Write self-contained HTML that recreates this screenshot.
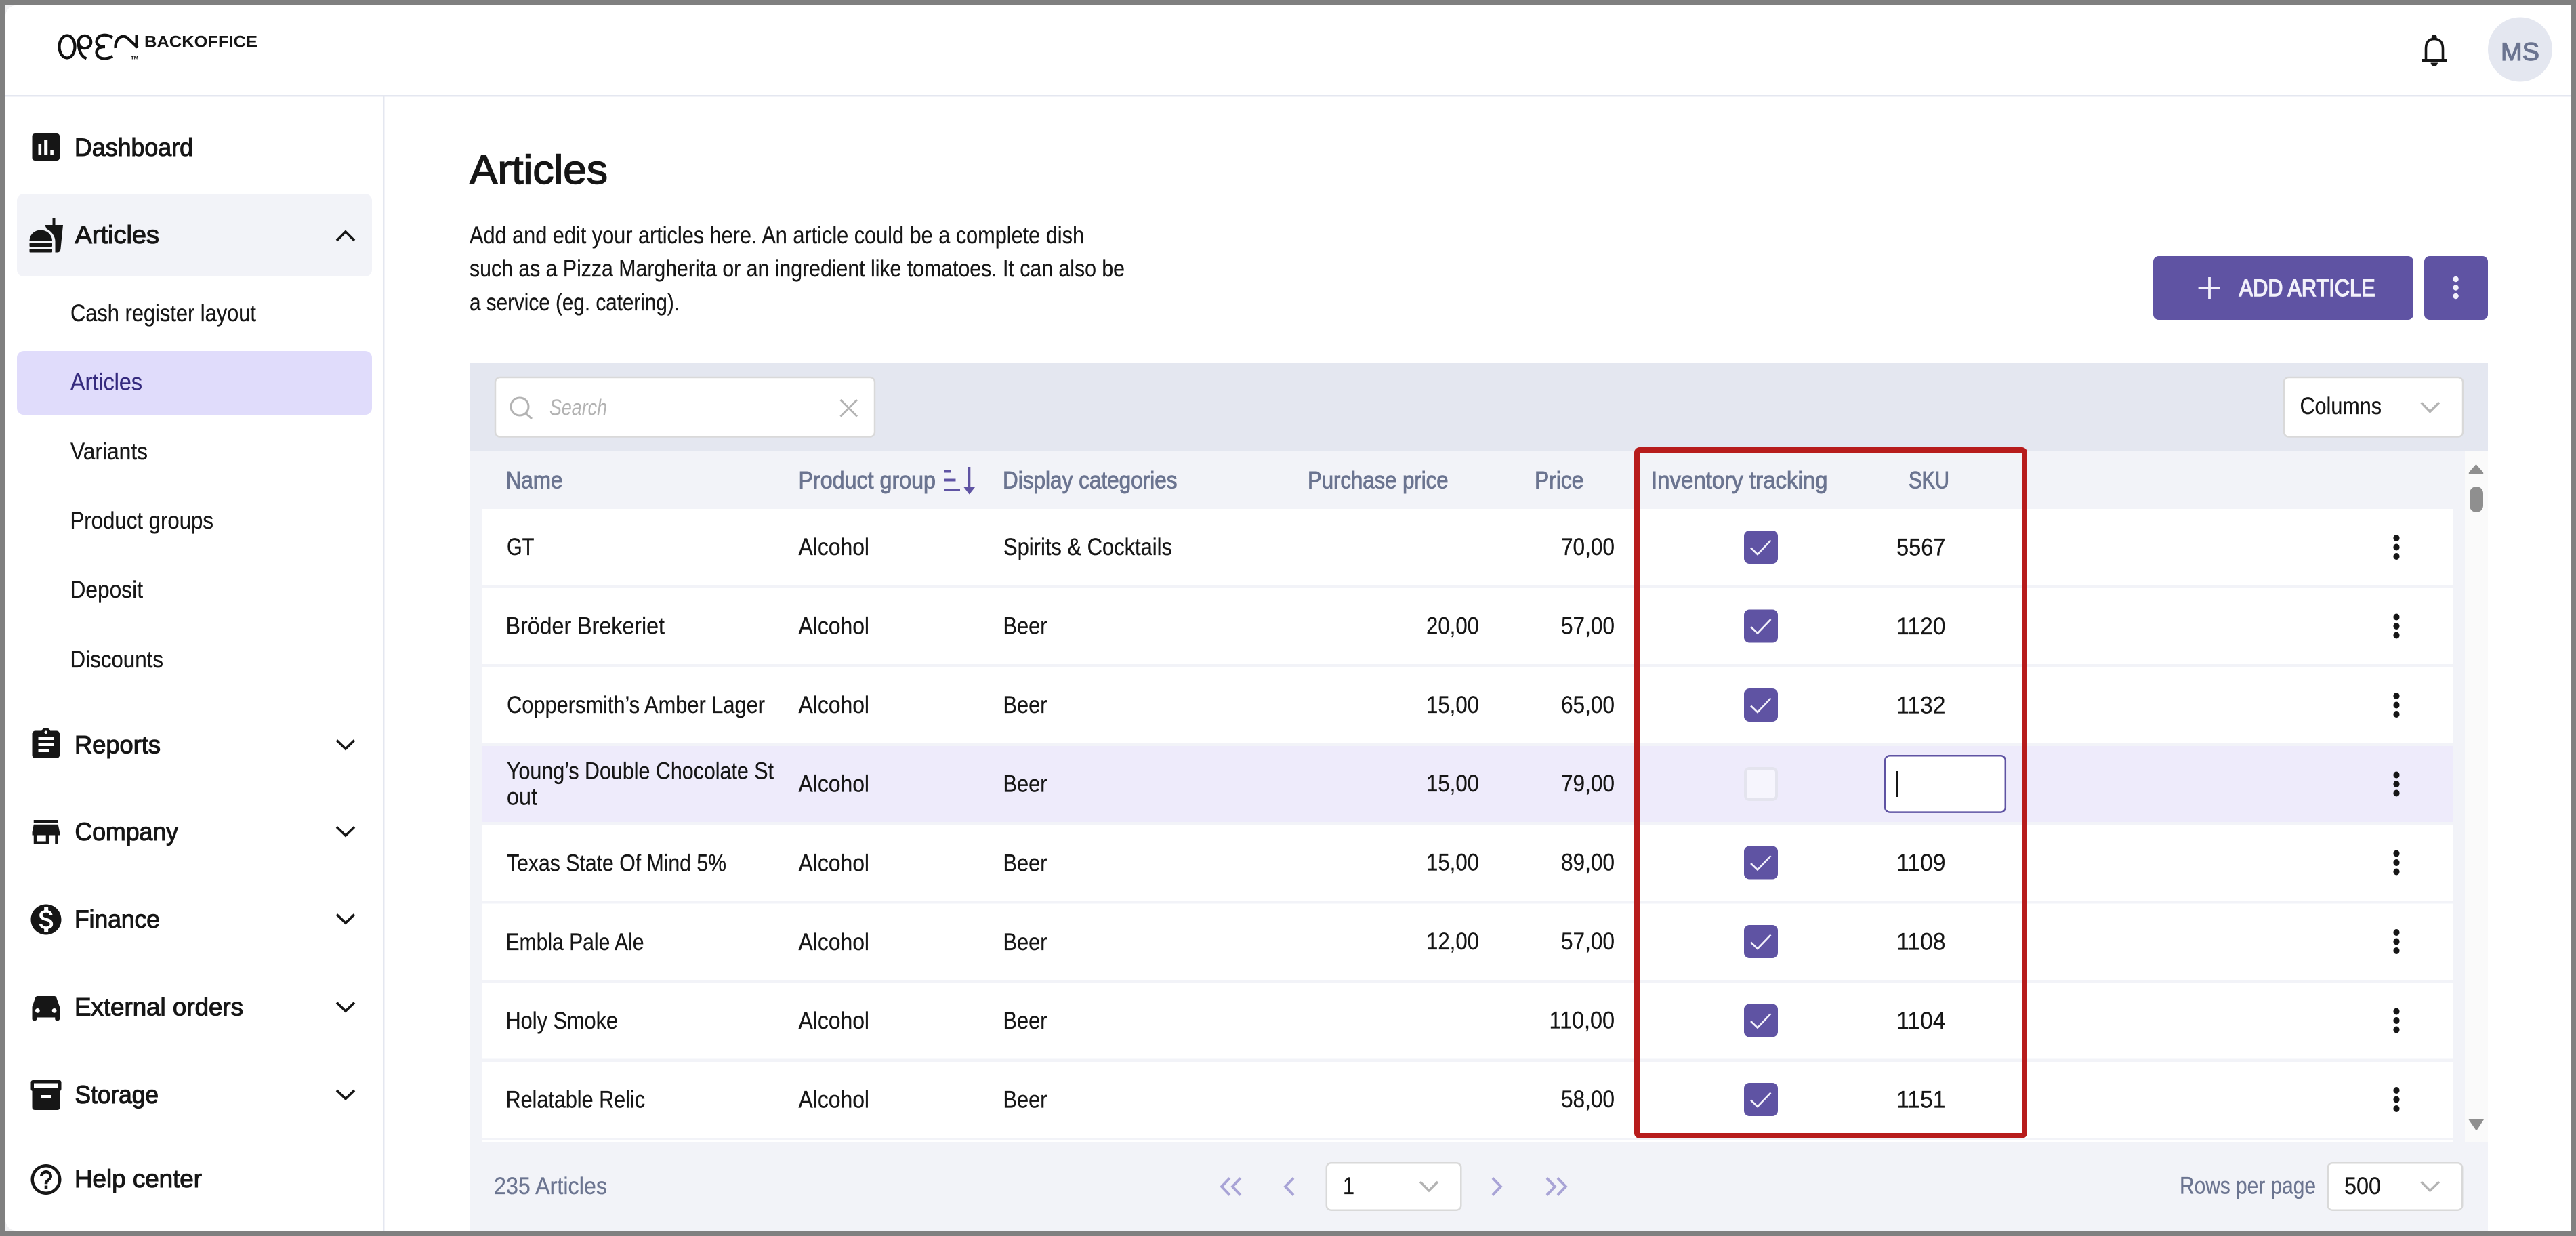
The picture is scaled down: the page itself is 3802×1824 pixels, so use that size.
<!DOCTYPE html>
<html><head><meta charset="utf-8"><title>Articles</title>
<style>
html,body{margin:0;padding:0;background:#808080;width:3802px;height:1824px;overflow:hidden}
svg{display:block}
text{font-family:"Liberation Sans",sans-serif;font-size:35px;fill:#161616;stroke:#161616;stroke-width:.25px;white-space:pre}
.nav{font-size:37px;stroke:#161616;stroke-width:1.1px}
.sub{font-size:35px}
.act{fill:#352a7e;stroke:#352a7e}
.th{fill:#6b7490;stroke:#6b7490;stroke-width:.9px}
.gr{fill:#6b7490;stroke:#6b7490}
</style></head><body>
<svg xmlns="http://www.w3.org/2000/svg" width="3802" height="1824" viewBox="0 0 3802 1824">
<defs>
<g id="cb"><rect x="-25" y="-24.5" width="50" height="49" rx="8" fill="#5f53a3"/><path d="M-15 1L-5 10.5L14.5-10" fill="none" stroke="#f4f2fb" stroke-width="2.6"/></g>
<g id="keb" fill="#161616"><ellipse cx="0" cy="-13.5" rx="4.6" ry="5"/><ellipse cx="0" cy="0" rx="4.6" ry="5"/><ellipse cx="0" cy="13.5" rx="4.6" ry="5"/></g>
<path id="chv" d="M497 0L510 12.5L523 0" fill="none" stroke="#161616" stroke-width="3.6"/>
</defs>
<rect width="3802" height="1824" fill="#808080"/>
<rect x="8" y="8" width="3786" height="1808" fill="#f1f1f3"/>
<path d="M24 8H3794V1816H24A16 16 0 0 1 8 1800V24A16 16 0 0 1 24 8Z" fill="#fff"/>
<rect x="8" y="140" width="3786" height="2.5" fill="#e4e7f0"/>
<rect x="565" y="142" width="2.5" height="1674" fill="#e4e7f0"/>

<!-- logo -->
<g fill="none" stroke="#111" stroke-width="4.2">
<ellipse cx="99" cy="69" rx="11.5" ry="16.5"/>
<circle cx="125" cy="62" r="9.2"/>
<path d="M115.8 62C115.8 75 120 83 127.500 86.500"/>
<path d="M166 55.500C158 50 146 50 143 59C141 66 147 69 155 69C145 69 141 74 143 80C146 88 158 88 166 83"/>
<path d="M170.500 71C170 56 181 50 188 56L203 70"/>
</g>
<rect x="199.500" y="52" width="4.500" height="19" fill="#111"/>
<text x="193" y="87.5" style="font-size:6.5px;font-weight:bold;stroke:none" textLength="11" lengthAdjust="spacingAndGlyphs">TM</text>
<text x="213" y="69.5" style="font-size:24.5px;font-weight:bold;stroke:none" textLength="167" lengthAdjust="spacingAndGlyphs">BACKOFFICE</text>

<!-- header right -->
<path d="M3580.5 88V72C3580.5 62 3585 57.5 3592.7 57.5C3600.5 57.5 3605.5 62 3605.5 72V88" fill="none" stroke="#161616" stroke-width="3.6"/>
<circle cx="3592.7" cy="55" r="4" fill="#161616"/>
<rect x="3574.5" y="87" width="36.5" height="4" fill="#161616"/>
<path d="M3587.5 92.5H3598A5 4.8 0 0 1 3587.5 92.5Z" fill="#161616"/>
<circle cx="3719.5" cy="73" r="47.5" fill="#e4e7f0"/>
<text x="3691" y="89" style="font-size:37px;fill:#6b7490;stroke:#6b7490;stroke-width:1.2px" textLength="57" lengthAdjust="spacingAndGlyphs">MS</text>

<!-- sidebar -->
<rect x="25" y="286" width="524" height="122" rx="10" fill="#f2f3f8"/>
<rect x="25" y="518" width="524" height="94" rx="10" fill="#e0dcfb"/>

<rect x="47.5" y="197" width="40.5" height="40" rx="4" fill="#161616"/>
<g fill="#fff"><rect x="56.5" y="213" width="4.6" height="15"/><rect x="65.2" y="206" width="5" height="22"/><rect x="74.3" y="222" width="4.6" height="6"/></g>
<text class="nav" x="110" y="230" textLength="175" lengthAdjust="spacingAndGlyphs">Dashboard</text>

<g fill="#161616">
<path d="M43.5 355C44 345 52 339.5 60 339.5C68 339.5 76.500 345 77 355Z"/>
<rect x="43.5" y="358.500" width="33.500" height="5.500" rx="1"/>
<rect x="43.5" y="367" width="33.500" height="5.500" rx="1"/>
<path d="M66 332H77.500V322H81.500V332H93L89.500 367Q89 372.500 85 372.500H81.500V356C81.500 349 76 341 69 338Z"/>
</g>
<text class="nav" x="110.500" y="359" textLength="124.500" lengthAdjust="spacingAndGlyphs">Articles</text>
<path d="M497 355L510 342L523 355" fill="none" stroke="#161616" stroke-width="3.6"/>

<text class="sub" x="104" y="474" textLength="274" lengthAdjust="spacingAndGlyphs">Cash register layout</text>
<text class="sub act" x="104" y="575.5" textLength="106" lengthAdjust="spacingAndGlyphs">Articles</text>
<text class="sub" x="104" y="678" textLength="114" lengthAdjust="spacingAndGlyphs">Variants</text>
<text class="sub" x="103.500" y="780" textLength="211.500" lengthAdjust="spacingAndGlyphs">Product groups</text>
<text class="sub" x="103.500" y="882" textLength="107.500" lengthAdjust="spacingAndGlyphs">Deposit</text>
<text class="sub" x="103.500" y="985" textLength="137.500" lengthAdjust="spacingAndGlyphs">Discounts</text>

<g fill="#161616">
<path transform="translate(40.75 1071.75) scale(2.25)" d="M19 3h-4.18C14.4 1.84 13.3 1 12 1c-1.3 0-2.4.84-2.82 2H5c-1.1 0-2 .9-2 2v14c0 1.1.9 2 2 2h14c1.1 0 2-.9 2-2V5c0-1.1-.9-2-2-2zm-7 0c.55 0 1 .45 1 1s-.45 1-1 1-1-.45-1-1 .45-1 1-1zm2 14H7v-2h7v2zm3-4H7v-2h10v2zm0-4H7V7h10v2z"/>
<path transform="translate(40.75 1201) scale(2.25)" d="M20 4H4v2h16V4zm1 10v-2l-1-5H4l-1 5v2h1v6h10v-6h4v6h2v-6h1zm-9 4H6v-4h6v4z"/>
<path transform="translate(41 1330) scale(2.25)" d="M12 2C6.48 2 2 6.48 2 12s4.48 10 10 10 10-4.48 10-10S17.52 2 12 2zm1.41 16.09V20h-2.67v-1.93c-1.71-.36-3.16-1.46-3.27-3.4h1.96c.1 1.05.82 1.87 2.65 1.87 1.96 0 2.4-.98 2.4-1.59 0-.83-.44-1.61-2.67-2.14-2.48-.6-4.18-1.62-4.18-3.67 0-1.72 1.39-2.84 3.11-3.21V4h2.67v1.95c1.86.45 2.79 1.86 2.85 3.39H14.3c-.05-1.11-.64-1.87-2.22-1.87-1.5 0-2.4.68-2.4 1.64 0 .84.65 1.39 2.67 1.91s4.18 1.39 4.18 3.91c-.01 1.83-1.38 2.83-3.12 3.16z"/>
<path transform="translate(40.75 1458.75) scale(2.25)" d="M18.92 6.01C18.72 5.42 18.16 5 17.5 5h-11c-.66 0-1.21.42-1.42 1.01L3 12v8c0 .55.45 1 1 1h1c.55 0 1-.45 1-1v-1h12v1c0 .55.45 1 1 1h1c.55 0 1-.45 1-1v-8l-2.08-5.990zM6.500 16c-.83 0-1.500-.67-1.500-1.500S5.670 13 6.500 13s1.500.67 1.500 1.500S7.330 16 6.500 16zm11 0c-.83 0-1.500-.67-1.500-1.500s.67-1.500 1.500-1.500 1.500.67 1.500 1.500-.67 1.500-1.500 1.500z"/>
<rect x="45.5" y="1594" width="45" height="16" rx="3"/>
<path d="M47.5 1609H88.500V1634Q88.500 1638 84.500 1638H51.500Q47.5 1638 47.5 1634Z"/>
<path transform="translate(41 1713.5) scale(2.25)" d="M11 18h2v-2h-2v2zm1-16C6.48 2 2 6.48 2 12s4.48 10 10 10 10-4.480 10-10S17.520 2 12 2zm0 18c-4.410 0-8-3.590-8-8s3.590-8 8-8 8 3.590 8 8-3.590 8-8 8zm0-14c-2.210 0-4 1.790-4 4h2c0-1.100.9-2 2-2s2 .9 2 2c0 2-3 1.750-3 5h2c0-2.250 3-2.500 3-5 0-2.210-1.790-4-4-4z"/>
</g>
<rect x="50" y="1598.500" width="36" height="7" fill="#fff"/>
<rect x="61" y="1616" width="14" height="5" fill="#fff"/>

<text class="nav" x="110" y="1111.5" textLength="127" lengthAdjust="spacingAndGlyphs">Reports</text>
<text class="nav" x="110.500" y="1240" textLength="152.500" lengthAdjust="spacingAndGlyphs">Company</text>
<text class="nav" x="110" y="1369" textLength="126" lengthAdjust="spacingAndGlyphs">Finance</text>
<text class="nav" x="110" y="1498.500" textLength="249" lengthAdjust="spacingAndGlyphs">External orders</text>
<text class="nav" x="110.500" y="1628" textLength="123.500" lengthAdjust="spacingAndGlyphs">Storage</text>
<text class="nav" x="110" y="1752" textLength="188" lengthAdjust="spacingAndGlyphs">Help center</text>
<use href="#chv" y="1092.500"/><use href="#chv" y="1220.500"/><use href="#chv" y="1349.500"/><use href="#chv" y="1479.500"/><use href="#chv" y="1609"/>

<!-- title block -->
<text x="693" y="271" style="font-size:60px;stroke:#161616;stroke-width:1.5px" textLength="204" lengthAdjust="spacingAndGlyphs">Articles</text>
<text x="693" y="359" textLength="907" lengthAdjust="spacingAndGlyphs">Add and edit your articles here. An article could be a complete dish</text>
<text x="693" y="408" textLength="967" lengthAdjust="spacingAndGlyphs">such as a Pizza Margherita or an ingredient like tomatoes. It can also be</text>
<text x="693" y="458" textLength="310" lengthAdjust="spacingAndGlyphs">a service (eg. catering).</text>

<!-- buttons -->
<rect x="3178" y="378" width="384" height="94" rx="8" fill="#5f53a3"/>
<rect x="3578" y="378" width="94" height="94" rx="8" fill="#5f53a3"/>
<path d="M3244.600 425H3277M3261 409V441" stroke="#f2f0fa" stroke-width="3.800" fill="none"/>
<text x="3304.600" y="437" style="font-size:35.500px;fill:#f2f0fa;stroke:#f2f0fa;stroke-width:1.4px" textLength="201" lengthAdjust="spacingAndGlyphs">ADD ARTICLE</text>
<g fill="#f2f0fa"><circle cx="3624.600" cy="412" r="4.200"/><circle cx="3624.600" cy="424.500" r="4.200"/><circle cx="3624.600" cy="437" r="4.200"/></g>

<!-- table shell -->
<rect x="693" y="535" width="2979" height="131" fill="#e4e7f0"/>
<rect x="693" y="666" width="2979" height="1150" fill="#f2f3f8"/>
<rect x="3638" y="666" width="34" height="1020" fill="#fafafa"/>
<path d="M3654.500 685L3665 697Q3666 700 3663 700H3646Q3643 700 3644 697Z" fill="#8f8f8f"/>
<rect x="3645" y="718" width="20" height="38" rx="10" fill="#8f8f8f"/>
<path d="M3643.500 1652H3666L3655.500 1668H3654.500Z" fill="#8f8f8f"/>

<!-- search -->
<rect x="731" y="557" width="560" height="87.500" rx="7" fill="#fff" stroke="#d9d9d9" stroke-width="2.500"/>
<circle cx="767" cy="600" r="13" fill="none" stroke="#b3b3b3" stroke-width="3"/>
<path d="M776 610L785 618" stroke="#b3b3b3" stroke-width="3"/>
<text x="811" y="612.700" style="font-size:33px;font-style:italic;fill:#b3b3b3;stroke:none" textLength="85" lengthAdjust="spacingAndGlyphs">Search</text>
<path d="M1240.500 590L1265 614.500M1265 590L1240.500 614.500" stroke="#b3b3b3" stroke-width="3" fill="none"/>

<!-- columns -->
<rect x="3371" y="557" width="264" height="87.500" rx="7" fill="#fff" stroke="#d9d9d9" stroke-width="2.500"/>
<text x="3394.500" y="611" textLength="120.500" lengthAdjust="spacingAndGlyphs">Columns</text>
<path d="M3573.500 594L3586.500 607.500L3600 594" fill="none" stroke="#b3b3b3" stroke-width="3.400"/>

<!-- table head -->
<text class="th" x="746.500" y="720.500" textLength="84" lengthAdjust="spacingAndGlyphs">Name</text>
<text class="th" x="1178.500" y="720.500" textLength="202.500" lengthAdjust="spacingAndGlyphs">Product group</text>
<g fill="#5f53a3"><rect x="1394" y="693.500" width="10" height="4"/><rect x="1394" y="706.500" width="16.500" height="4"/><rect x="1394" y="721" width="23" height="4"/><rect x="1428.700" y="689" width="3.600" height="32"/><path d="M1422.500 719H1439L1430.700 729.500Z"/></g>
<text class="th" x="1480" y="720.500" textLength="257.500" lengthAdjust="spacingAndGlyphs">Display categories</text>
<text class="th" x="1930" y="720.500" textLength="207.500" lengthAdjust="spacingAndGlyphs">Purchase price</text>
<text class="th" x="2265" y="720.500" textLength="72.500" lengthAdjust="spacingAndGlyphs">Price</text>
<text class="th" x="2437" y="720.500" textLength="260.500" lengthAdjust="spacingAndGlyphs">Inventory tracking</text>
<text class="th" x="2817" y="720.500" textLength="60" lengthAdjust="spacingAndGlyphs">SKU</text>

<!-- rows -->
<g fill="#fff">
<rect x="711" y="751" width="2909" height="113"/>
<rect x="711" y="868" width="2909" height="112"/>
<rect x="711" y="984" width="2909" height="113"/>
<rect x="711" y="1101" width="2909" height="112" fill="#eeebfb"/>
<rect x="711" y="1217" width="2909" height="112.500"/>
<rect x="711" y="1333.500" width="2909" height="112.500"/>
<rect x="711" y="1450" width="2909" height="112.500"/>
<rect x="711" y="1567" width="2909" height="112"/>
<rect x="711" y="1683" width="2909" height="3"/>
</g>

<!-- row 1 -->
<text x="748" y="819" textLength="40.500" lengthAdjust="spacingAndGlyphs">GT</text>
<text x="1178.500" y="819" textLength="104.500" lengthAdjust="spacingAndGlyphs">Alcohol</text>
<text x="1481" y="819" textLength="249" lengthAdjust="spacingAndGlyphs">Spirits &amp; Cocktails</text>
<text x="2304" y="819" textLength="79" lengthAdjust="spacingAndGlyphs">70,00</text>
<use href="#cb" x="2599" y="807.500"/>
<text x="2799" y="819.500" textLength="72.500" lengthAdjust="spacingAndGlyphs">5567</text>
<use href="#keb" x="3537" y="807.500"/>
<!-- row 2 -->
<text x="746.500" y="935.400" textLength="234.500" lengthAdjust="spacingAndGlyphs">Bröder Brekeriet</text>
<text x="1178.500" y="935.400" textLength="104.500" lengthAdjust="spacingAndGlyphs">Alcohol</text>
<text x="1480.500" y="935.400" textLength="65" lengthAdjust="spacingAndGlyphs">Beer</text>
<text x="2105" y="935.400" textLength="78" lengthAdjust="spacingAndGlyphs">20,00</text>
<text x="2304" y="935.400" textLength="79" lengthAdjust="spacingAndGlyphs">57,00</text>
<use href="#cb" x="2599" y="924"/>
<text x="2799" y="935.900" textLength="72.500" lengthAdjust="spacingAndGlyphs">1120</text>
<use href="#keb" x="3537" y="924"/>
<!-- row 3 -->
<text x="748" y="1051.800" textLength="381" lengthAdjust="spacingAndGlyphs">Coppersmith’s Amber Lager</text>
<text x="1178.500" y="1051.800" textLength="104.500" lengthAdjust="spacingAndGlyphs">Alcohol</text>
<text x="1480.500" y="1051.800" textLength="65" lengthAdjust="spacingAndGlyphs">Beer</text>
<text x="2105" y="1051.800" textLength="78" lengthAdjust="spacingAndGlyphs">15,00</text>
<text x="2304" y="1051.800" textLength="79" lengthAdjust="spacingAndGlyphs">65,00</text>
<use href="#cb" x="2599" y="1040.500"/>
<text x="2799" y="1052.300" textLength="72.500" lengthAdjust="spacingAndGlyphs">1132</text>
<use href="#keb" x="3537" y="1040.500"/>
<!-- row 4 -->
<text x="748" y="1149.500" textLength="394" lengthAdjust="spacingAndGlyphs">Young’s Double Chocolate St</text>
<text x="748" y="1187.500" textLength="45" lengthAdjust="spacingAndGlyphs">out</text>
<text x="1178.500" y="1168.600" textLength="104.500" lengthAdjust="spacingAndGlyphs">Alcohol</text>
<text x="1480.500" y="1168.600" textLength="65" lengthAdjust="spacingAndGlyphs">Beer</text>
<text x="2105" y="1168.200" textLength="78" lengthAdjust="spacingAndGlyphs">15,00</text>
<text x="2304" y="1168.200" textLength="79" lengthAdjust="spacingAndGlyphs">79,00</text>
<rect x="2576" y="1134" width="46" height="46" rx="6" fill="#f6f5fd" stroke="#e4e4ee" stroke-width="4"/>
<rect x="2782.200" y="1115.200" width="177.600" height="83.400" rx="7" fill="#fff" stroke="#5f53a3" stroke-width="2.500"/>
<rect x="2799" y="1138" width="2" height="38" fill="#161616"/>
<use href="#keb" x="3537" y="1157"/>
<!-- row 5 -->
<text x="748" y="1285.400" textLength="324" lengthAdjust="spacingAndGlyphs">Texas State Of Mind 5%</text>
<text x="1178.500" y="1285.400" textLength="104.500" lengthAdjust="spacingAndGlyphs">Alcohol</text>
<text x="1480.500" y="1285.400" textLength="65" lengthAdjust="spacingAndGlyphs">Beer</text>
<text x="2105" y="1284.600" textLength="78" lengthAdjust="spacingAndGlyphs">15,00</text>
<text x="2304" y="1284.600" textLength="79" lengthAdjust="spacingAndGlyphs">89,00</text>
<use href="#cb" x="2599" y="1273"/>
<text x="2799" y="1285.100" textLength="72.500" lengthAdjust="spacingAndGlyphs">1109</text>
<use href="#keb" x="3537" y="1273"/>
<!-- row 6 -->
<text x="746.500" y="1401.800" textLength="204" lengthAdjust="spacingAndGlyphs">Embla Pale Ale</text>
<text x="1178.500" y="1401.800" textLength="104.500" lengthAdjust="spacingAndGlyphs">Alcohol</text>
<text x="1480.500" y="1401.800" textLength="65" lengthAdjust="spacingAndGlyphs">Beer</text>
<text x="2105" y="1401" textLength="78" lengthAdjust="spacingAndGlyphs">12,00</text>
<text x="2304" y="1401" textLength="79" lengthAdjust="spacingAndGlyphs">57,00</text>
<use href="#cb" x="2599" y="1389.500"/>
<text x="2799" y="1401.500" textLength="72.500" lengthAdjust="spacingAndGlyphs">1108</text>
<use href="#keb" x="3537" y="1389.500"/>
<!-- row 7 -->
<text x="746.500" y="1518.200" textLength="165.500" lengthAdjust="spacingAndGlyphs">Holy Smoke</text>
<text x="1178.500" y="1518.200" textLength="104.500" lengthAdjust="spacingAndGlyphs">Alcohol</text>
<text x="1480.500" y="1518.200" textLength="65" lengthAdjust="spacingAndGlyphs">Beer</text>
<text x="2286.500" y="1517.400" textLength="96.500" lengthAdjust="spacingAndGlyphs">110,00</text>
<use href="#cb" x="2599" y="1506"/>
<text x="2799" y="1517.900" textLength="72.500" lengthAdjust="spacingAndGlyphs">1104</text>
<use href="#keb" x="3537" y="1506"/>
<!-- row 8 -->
<text x="746.500" y="1634.600" textLength="205.500" lengthAdjust="spacingAndGlyphs">Relatable Relic</text>
<text x="1178.500" y="1634.600" textLength="104.500" lengthAdjust="spacingAndGlyphs">Alcohol</text>
<text x="1480.500" y="1634.600" textLength="65" lengthAdjust="spacingAndGlyphs">Beer</text>
<text x="2304" y="1633.800" textLength="79" lengthAdjust="spacingAndGlyphs">58,00</text>
<use href="#cb" x="2599" y="1622.500"/>
<text x="2799" y="1634.300" textLength="72.500" lengthAdjust="spacingAndGlyphs">1151</text>
<use href="#keb" x="3537" y="1622.500"/>

<!-- red highlight -->
<rect x="2416" y="664" width="572" height="1012" rx="4" fill="none" stroke="#b71c1c" stroke-width="8"/>

<!-- footer -->
<text class="gr" x="729" y="1762" textLength="167" lengthAdjust="spacingAndGlyphs">235 Articles</text>
<g fill="none" stroke="#a8a3d6" stroke-width="3.800">
<path d="M1815 1738.500L1803 1751L1815 1763.500M1831 1738.500L1819 1751L1831 1763.500"/>
<path d="M1909 1738.500L1897 1751L1909 1763.500"/>
<path d="M2203 1738.500L2215 1751L2203 1763.500"/>
<path d="M2283 1738.500L2295 1751L2283 1763.500M2299 1738.500L2311 1751L2299 1763.500"/>
</g>
<rect x="1957.800" y="1716.200" width="198.500" height="69.500" rx="7" fill="#fff" stroke="#d9d9d9" stroke-width="2.500"/>
<text x="1982" y="1762" textLength="17" lengthAdjust="spacingAndGlyphs">1</text>
<path d="M2096 1744L2109 1757L2122 1744" fill="none" stroke="#b3b3b3" stroke-width="3.400"/>
<text class="gr" x="3217" y="1761.700" textLength="201" lengthAdjust="spacingAndGlyphs">Rows per page</text>
<rect x="3435.700" y="1716.200" width="198.500" height="69.500" rx="7" fill="#fff" stroke="#d9d9d9" stroke-width="2.500"/>
<text x="3460" y="1762" textLength="54" lengthAdjust="spacingAndGlyphs">500</text>
<path d="M3573.500 1744L3586.500 1757L3600 1744" fill="none" stroke="#b3b3b3" stroke-width="3.400"/>
</svg>
</body></html>
